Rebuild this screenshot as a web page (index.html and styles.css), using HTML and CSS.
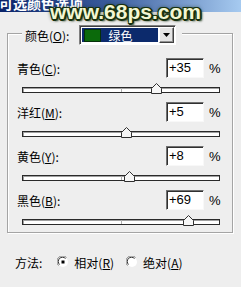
FILE: index.html
```html
<!DOCTYPE html>
<html lang="zh">
<head>
    <meta charset="UTF-8">
    <title>可选颜色选项</title>
    <link rel="stylesheet" href="styles.css">
</head>
<body>
    <div class="titlebar"><span class="title">可选颜色选项</span></div>
    <div class="watermark">www.68ps.com</div>

    <div class="group">
        <div class="group-head">
            <span class="lbl">颜色(<u>O</u>):</span>
            <div class="combo">
                <div class="combo-field"><span class="swatch"></span><span>绿色</span></div>
                <div class="combo-btn">
                    <svg width="7" height="4" viewBox="0 0 7 4"><polygon points="0,0 7,0 3.5,4" fill="#000"/></svg>
                </div>
            </div>
        </div>

        <div class="row first">
            <span class="lbl">青色(<u>C</u>):</span>
            <div class="num">+35</div>
            <span class="pct">%</span>
        </div>
        <div class="slider">
            <div class="track"></div>
            <svg class="thumb" style="left:129px" width="11" height="11" viewBox="0 0 11 11"><polygon points="5.5,0.5 10.5,5.5 10.5,10.5 0.5,10.5 0.5,5.5" fill="#f6f6f6" stroke="#303030"/></svg>
        </div>

        <div class="row">
            <span class="lbl">洋红(<u>M</u>):</span>
            <div class="num">+5</div>
            <span class="pct">%</span>
        </div>
        <div class="slider">
            <div class="track"></div>
            <svg class="thumb" style="left:99px" width="11" height="11" viewBox="0 0 11 11"><polygon points="5.5,0.5 10.5,5.5 10.5,10.5 0.5,10.5 0.5,5.5" fill="#f6f6f6" stroke="#303030"/></svg>
        </div>

        <div class="row">
            <span class="lbl">黄色(<u>Y</u>):</span>
            <div class="num">+8</div>
            <span class="pct">%</span>
        </div>
        <div class="slider">
            <div class="track"></div>
            <svg class="thumb" style="left:102px" width="11" height="11" viewBox="0 0 11 11"><polygon points="5.5,0.5 10.5,5.5 10.5,10.5 0.5,10.5 0.5,5.5" fill="#f6f6f6" stroke="#303030"/></svg>
        </div>

        <div class="row">
            <span class="lbl">黑色(<u>B</u>):</span>
            <div class="num">+69</div>
            <span class="pct">%</span>
        </div>
        <div class="slider">
            <div class="track"></div>
            <svg class="thumb" style="left:161px" width="11" height="11" viewBox="0 0 11 11"><polygon points="5.5,0.5 10.5,5.5 10.5,10.5 0.5,10.5 0.5,5.5" fill="#f6f6f6" stroke="#303030"/></svg>
        </div>
    </div>

    <div class="method">
        <span class="lbl">方法:</span>
        <svg class="radio r1" width="12" height="12" viewBox="0 0 12 12">
            <circle cx="6" cy="6" r="5" fill="#fff"/>
            <path d="M1.5 9.5 A5.5 5.5 0 0 1 9.5 1.5" fill="none" stroke="#808080"/>
            <path d="M2.5 8.5 A4.2 4.2 0 0 1 8.5 2.5" fill="none" stroke="#303030"/>
            <rect x="4.5" y="4.5" width="3" height="3" fill="#000"/>
        </svg>
        <span class="opt">相对(<u>R</u>)</span>
        <svg class="radio r2" width="12" height="12" viewBox="0 0 12 12">
            <circle cx="6" cy="6" r="5" fill="#fff"/>
            <path d="M1.5 9.5 A5.5 5.5 0 0 1 9.5 1.5" fill="none" stroke="#808080"/>
            <path d="M2.5 8.5 A4.2 4.2 0 0 1 8.5 2.5" fill="none" stroke="#303030"/>
        </svg>
        <span class="opt">绝对(<u>A</u>)</span>
    </div>
</body>
</html>
```

FILE: styles.css
```css
body { margin: 0; background: #eeeeee; font-family: "Noto Sans CJK SC", sans-serif; font-size: 12px; color: #000; position: relative; width: 241px; height: 287px; overflow: hidden; }
u { text-decoration: underline; text-underline-offset: 1px; }

.titlebar { height: 12px; overflow: hidden; background: linear-gradient(to right, #0a246a, #3a5c9c 45%, #a6caf0); }
.title { display: block; margin: -5px 0 0 -1px; color: #fff; font-weight: bold; font-size: 14px; line-height: 17px; }

.watermark { position: absolute; left: 50px; top: 1px; font-family: "Liberation Sans", sans-serif; font-weight: bold; font-size: 21px; line-height: 22px; color: #f2f6d2;
    text-shadow: 1px 1px 0 #17300e, -1px -1px 0 #17300e, 1px -1px 0 #17300e, -1px 1px 0 #17300e, 0 2px 0 #17300e, 2px 0 0 #17300e, 0 0 4px #10240a, 2px 2px 2px #1a3412; }

.group { box-sizing: border-box; height: 200px; margin: 21px 8px 0 7px; border: 1px solid #a4a4a4; box-shadow: inset 1px 1px #fff, 1px 1px #fff; }
.group-head { display: flex; align-items: center; width: fit-content; margin: -9px 0 0 14px; padding: 0 6px 0 3px; background: #eeeeee; }
.group-head .lbl { margin-right: 10px; }

.combo { display: flex; box-sizing: border-box; width: 97px; height: 20px; padding: 1px; border: 1px solid; border-color: #808080 #fff #fff #808080; box-shadow: inset 1px 1px #404040; background: #fff; }
.combo-field { flex: 1; display: flex; align-items: center; margin: 1px; background: #0c2a6c; color: #fff; }
.swatch { width: 15px; height: 11px; margin: 0 7px 0 2px; background: #0b6a0b; border: 1px solid #06300a; }
.combo-btn { width: 13px; display: flex; align-items: center; justify-content: center; background: #e4e4e4; border: 1px solid; border-color: #fff #404040 #404040 #fff; box-shadow: inset -1px -1px #909090; }

.row { display: grid; grid-template-columns: 149px 38px 1fr; align-items: center; padding-left: 9px; margin-top: 7px; height: 20px; }
.row.first { margin-top: 13px; }
.num { box-sizing: border-box; height: 20px; padding: 1px 0 0 2px; background: #fff; border: 1px solid; border-color: #707070 #f8f8f8 #f8f8f8 #707070; box-shadow: inset 1px 1px #303030; font-family: "Liberation Sans", sans-serif; font-size: 13px; line-height: 16px; }
.pct { padding-left: 5px; font-family: "Liberation Sans", sans-serif; font-size: 13px; }

.slider { position: relative; height: 14px; margin: 3px 0 0 14px; width: 198px; }
.track { position: relative; top: 6px; box-sizing: border-box; height: 6px; border: 1px solid #2a2a2a; background: #fff; box-shadow: inset 1px 1px #a0a0a0; }
.track::after { content: ""; position: absolute; left: 98px; top: 0; width: 1px; height: 4px; background: #b0b0b0; }
.thumb { position: absolute; top: 2px; }

.method { display: flex; align-items: center; margin: 22px 0 0 15px; height: 14px; }
.radio.r1 { margin-left: 15px; }
.radio.r2 { margin-left: 12px; }
.opt { margin-left: 5px; }
```
